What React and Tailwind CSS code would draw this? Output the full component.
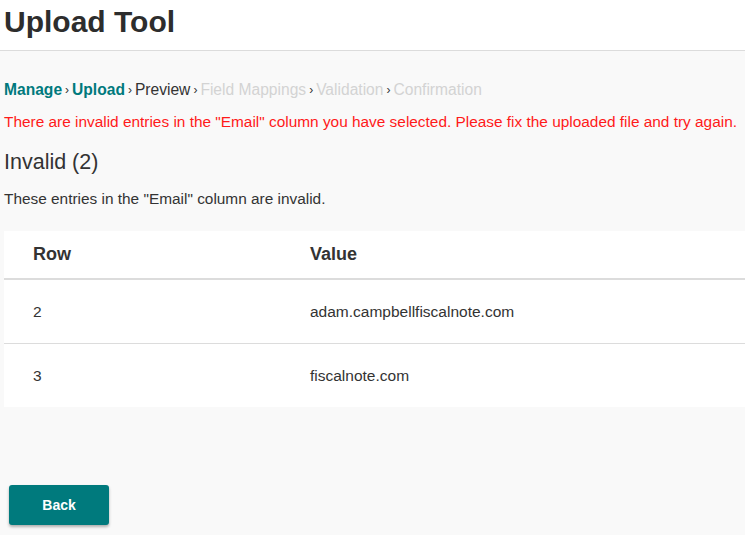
const steps = [
  { label: 'Manage', state: 'done' },
  { label: 'Upload', state: 'done' },
  { label: 'Preview', state: 'current' },
  { label: 'Field Mappings', state: 'todo' },
  { label: 'Validation', state: 'todo' },
  { label: 'Confirmation', state: 'todo' },
]

const invalidRows = [
  { row: 2, value: 'adam.campbellfiscalnote.com' },
  { row: 3, value: 'fiscalnote.com' },
]

const stepClass = {
  done: 'font-bold text-[#00797d]',
  current: 'text-[#333333]',
  todo: 'text-[#d3d3d3]',
}

const Breadcrumbs = () => (
  <nav className="flex items-center text-[15.6px] leading-5">
    {steps.map((step, i) => (
      <span key={step.label} className="flex items-center">
        {i > 0 && <span className="mx-[3px] text-[12px] text-[#333333]">›</span>}
        <span className={stepClass[step.state]}>{step.label}</span>
      </span>
    ))}
  </nav>
)

export default function App() {
  return (
    <div className="min-h-screen bg-[#f9f9f9] font-['Liberation_Sans',Arial,sans-serif] text-[#333333]">
      <header className="h-[51px] bg-white border-b border-[#dcdcdc] px-[4px] pt-[2px]">
        <h1 className="text-[30px] font-bold leading-[40px] text-[#2d2d2d]">Upload Tool</h1>
      </header>

      <main className="pl-[4px] pt-[29px]">
        <Breadcrumbs />
        <p className="mt-[12px] text-[15.4px] leading-5 text-[#ff1a1a]">
          There are invalid entries in the "Email" column you have selected. Please fix the uploaded file and try again.
        </p>
        <h2 className="mt-[18px] text-[21.5px] font-light leading-6 text-[#333333]">Invalid (2)</h2>
        <p className="mt-[15px] text-[15.4px] leading-5">These entries in the "Email" column are invalid.</p>

        <table className="mt-[22px] w-full table-fixed bg-white border-collapse">
          <colgroup>
            <col className="w-[306px]" />
            <col />
          </colgroup>
          <thead>
            <tr className="h-[48px] border-b-2 border-[#dcdcdc]">
              <th className="pl-[29px] text-left text-[18px] font-semibold">Row</th>
              <th className="text-left text-[18px] font-semibold">Value</th>
            </tr>
          </thead>
          <tbody>
            {invalidRows.map((r, i) => (
              <tr key={r.row} className={`h-[64px] ${i < invalidRows.length - 1 ? 'border-b border-[#dcdcdc]' : ''}`}>
                <td className="pl-[29px] text-[15.5px]">{r.row}</td>
                <td className="text-[15.5px]">{r.value}</td>
              </tr>
            ))}
          </tbody>
        </table>

        <button className="mt-[78px] ml-[5px] h-[40px] w-[100px] rounded-[3px] bg-[#007a7d] text-[14px] font-bold text-white shadow-[0_2px_3px_rgba(0,0,0,0.3)]">
          Back
        </button>
      </main>
    </div>
  )
}
